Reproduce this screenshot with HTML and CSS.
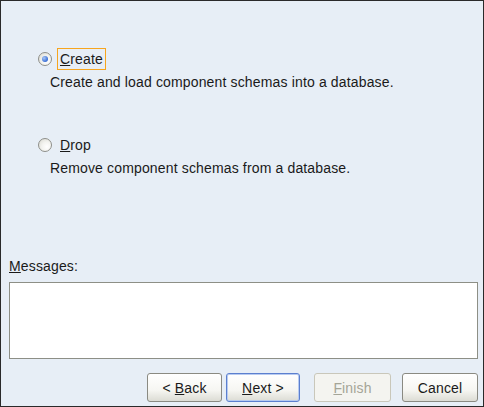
FILE: index.html
```html
<!DOCTYPE html>
<html>
<head>
<meta charset="utf-8">
<link rel="stylesheet" href="styles.css">
</head>
<body>
<div class="frame">
  <div class="options">
    <div class="option">
      <div class="radio-row">
        <span class="radio checked"><span class="dot"></span></span>
        <span class="label focused"><u>C</u>reate</span>
      </div>
      <div class="desc">Create and load component schemas into a database.</div>
    </div>
    <div class="option second">
      <div class="radio-row">
        <span class="radio"></span>
        <span class="label"><u>D</u>rop</span>
      </div>
      <div class="desc">Remove component schemas from a database.</div>
    </div>
  </div>
  <div class="messages">
    <div class="msg-label"><u>M</u>essages:</div>
    <div class="msg-box"></div>
  </div>
  <div class="buttons">
    <button class="btn back">&lt; <u>B</u>ack</button>
    <button class="btn default"><u>N</u>ext &gt;</button>
    <button class="btn disabled"><u>F</u>inish</button>
    <button class="btn cancel">Cancel</button>
  </div>
</div>
</body>
</html>
```
FILE: styles.css
```css
html, body {
  margin: 0;
  padding: 0;
}
body {
  font-family: "Liberation Sans", Arial, sans-serif;
  font-size: 14px;
  letter-spacing: 0.15px;
  color: #1a1a1a;
}
.frame {
  width: 484px;
  height: 407px;
  box-sizing: border-box;
  border: 1px solid #2a2a2a;
  background: #e7eef6;
  display: flex;
  flex-direction: column;
}
.options {
  padding: 47px 0 0 37px;
  flex: 1;
}
.option.second {
  margin-top: 44px;
}
.radio-row {
  display: flex;
  align-items: center;
  height: 22px;
}
.radio {
  width: 14px;
  height: 14px;
  box-sizing: border-box;
  border-radius: 50%;
  border: 1px solid #8e8f8a;
  background: radial-gradient(circle at 65% 65%, #ffffff 0%, #f3f3ef 45%, #d6d6ce 100%);
  display: flex;
  align-items: center;
  justify-content: center;
  margin-right: 7px;
}
.dot {
  width: 6px;
  height: 6px;
  border-radius: 50%;
  background: radial-gradient(circle at 35% 35%, #a9c7f5, #3a6fd6 70%, #2c58b8);
}
.label {
  padding: 1px 2px;
  border: 1px solid transparent;
  line-height: 18px;
  margin-left: -2px;
}
.label.focused {
  border-color: #f7a51e;
}
.desc {
  margin-left: 12px;
  margin-top: 4px;
  line-height: 16px;
}
.messages {
  padding: 0 5px 0 8px;
}
.msg-label {
  line-height: 16px;
  margin-bottom: 8px;
}
.msg-box {
  height: 77px;
  box-sizing: border-box;
  border: 1px solid #8d8f86;
  background: #fff;
}
.buttons {
  display: flex;
  justify-content: flex-end;
  padding: 14px 5px 4px 0;
}
.btn {
  font-family: "Liberation Sans", Arial, sans-serif;
  font-size: 14px;
  letter-spacing: 0.15px;
  width: 75px;
  height: 29px;
  border: 1px solid #8a8a82;
  border-radius: 3px;
  background: linear-gradient(#ffffff 0%, #f6f6f2 60%, #dcdcd4 100%);
  color: #1a1a1a;
  padding: 0;
}
.btn.default {
  width: 74px;
  margin-left: 4px;
  border-color: #5b7fcf;
  box-shadow: inset 0 0 0 1px #b8cbf0;
}
.btn.disabled {
  width: 77px;
  color: #a5a597;
  border-color: #c9c7ba;
  background: #f4f4f0;
  margin-left: 14px;
}
.btn.cancel {
  width: 76px;
  margin-left: 11px;
}
```
